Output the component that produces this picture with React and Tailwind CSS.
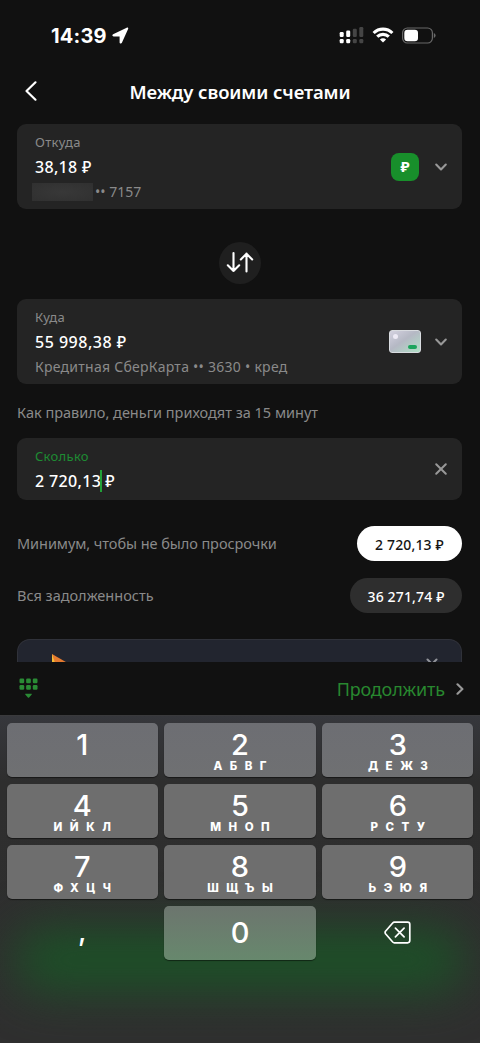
import React from "react"

const keys = [
    ["1", ""],
    ["2", "АБВГ"],
    ["3", "ДЕЖЗ"],
    ["4", "ИЙКЛ"],
    ["5", "МНОП"],
    ["6", "РСТУ"],
    ["7", "ФХЦЧ"],
    ["8", "ШЩЪЫ"],
    ["9", "ЬЭЮЯ"],
]

function Chevron() {
    return (
        <svg className="h-3 w-3.5" viewBox="0 0 14 12" fill="none" stroke="#989898" strokeWidth="2.1" strokeLinecap="round" strokeLinejoin="round">
            <path d="M2.2 3.6 7 8.4l4.8-4.8" />
        </svg>
    )
}

function StatusBar() {
    return (
        <div className="flex h-[70px] items-center justify-between pr-[44px] pl-[51px]">
            <div className="flex items-center gap-[5px] pt-px">
                <span className="font-['Inter',sans-serif] text-[20px] leading-6 font-bold tracking-[0.2px]">14:39</span>
                <svg className="h-[17px] w-[17px]" viewBox="0 0 17 17" fill="white">
                    <path d="M1.1 7.2 14.7.7c1-.5 1.9.4 1.4 1.4L9.9 15.8c-.5 1-2.300.8-2.300-.4V9.500H1.600C.3 9.500-.1 7.800 1.100 7.200Z" />
                </svg>
            </div>
            <div className="flex items-center">
                <svg className="mr-2 h-[18px] w-[25px]" viewBox="0 0 25 18" fill="white">
                    <rect x="0.7" y="6" width="4" height="5" rx="1.2" />
                    <rect x="7.2" y="4.6" width="4" height="6.4" rx="1.2" />
                    <rect x="0.7" y="13" width="4" height="4.2" rx="1.2" />
                    <rect x="7.2" y="13" width="4" height="4.2" rx="1.2" />
                    <g fill="#454545">
                        <rect x="13.8" y="2.8" width="4" height="8.2" rx="1.2" />
                        <rect x="20.3" y="1" width="4" height="10" rx="1.2" />
                        <rect x="13.8" y="13" width="4" height="4.2" rx="1.2" />
                        <rect x="20.3" y="13" width="4" height="4.2" rx="1.2" />
                    </g>
                </svg>
                <svg className="mr-2 h-4 w-[22px]" viewBox="0 0 22 16" fill="none" stroke="white" strokeWidth="3.1">
                    <path d="M1.6 6a13.4 13.4 0 0 1 18.8 0" />
                    <path d="M5.2 9.7a8.3 8.3 0 0 1 11.6 0" />
                    <path d="M11 15.6 7.9 12.5a4.4 4.4 0 0 1 6.2 0Z" fill="white" stroke="none" />
                </svg>
                <svg className="h-[17px] w-[34px]" viewBox="0 0 34 17">
                    <rect x="0.6" y="1" width="29.8" height="15" rx="4.8" fill="none" stroke="#696969" strokeWidth="1.2" />
                    <rect x="2.3" y="2.7" width="13.7" height="11.6" rx="3.2" fill="white" />
                    <path d="M31.8 6v5c1-.5 1.8-1.3 1.8-2.5S32.8 6.5 31.8 6Z" fill="#696969" />
                </svg>
            </div>
        </div>
    )
}

function Header() {
    return (
        <header className="grid h-[54px] grid-cols-[60px_1fr_60px] items-start pt-[8px]">
            <svg className="mt-[2px] ml-[24px] h-[22px] w-[14px]" viewBox="0 0 14 22" fill="none" stroke="white" strokeWidth="2.2" strokeLinecap="round" strokeLinejoin="round">
                <path d="M11.5 2.3 2.5 11l9 8.7" />
            </svg>
            <h1 className="text-center text-[18.5px] leading-7 font-semibold tracking-[-0.1px] whitespace-nowrap">Между своими счетами</h1>
        </header>
    )
}

function Accounts() {
    return (
        <>
            <section className="flex h-[85px] items-center justify-between rounded-[9px] bg-[#242424] pr-[14px] pl-[18px]">
                <div className="pt-[2px]">
                    <p className="text-[13px] leading-[20px] tracking-[0.3px] text-[#8a8a8a]">Откуда</p>
                    <p className="pt-[2px] text-[16px] leading-[26px] font-medium tracking-[0.3px]">38,18 ₽</p>
                    <div className="-ml-[3px] flex h-[24px] items-center gap-0.5 text-[14px] text-[#8a8a8a]">
                        <span className="h-[18px] w-[61px] bg-radial from-[#383838] to-[#303030]" />
                        <span>•• 7157</span>
                    </div>
                </div>
                <div className="flex items-center gap-[15px]">
                    <div className="flex size-7 items-center justify-center rounded-[8px] bg-[#188f2b] text-[15px] font-bold">₽</div>
                    <Chevron />
                </div>
            </section>

            <div className="flex h-[90px] items-center justify-center pt-[17px]">
                <button className="flex size-[42px] items-center justify-center rounded-full bg-[#1f1f1f]">
                    <svg className="h-6 w-7" viewBox="0 0 28 24" fill="none" stroke="white" strokeWidth="2.1" strokeLinecap="round" strokeLinejoin="round">
                        <path d="M7.5 2v18M1.8 14.3 7.500 20l5.700-5.700M20.500 20.500v-18M14.800 8.500l5.700-5.700 5.700 5.700" />
                    </svg>
                </button>
            </div>

            <section className="flex h-[85px] items-center justify-between rounded-[9px] bg-[#242424] pr-[14px] pl-[18px]">
                <div className="pt-[2px]">
                    <p className="text-[13px] leading-[20px] tracking-[0.2px] text-[#8a8a8a]">Куда</p>
                    <p className="pt-[2px] text-[16px] leading-[26px] font-medium tracking-[0.5px]">55 998,38 ₽</p>
                    <p className="text-[14px] leading-[24px] tracking-[0.26px] text-[#8a8a8a]">Кредитная СберКарта •• 3630 • кред</p>
                </div>
                <div className="flex items-center gap-[13px]">
                    <div className="flex h-[23px] w-8 items-start justify-between rounded-[3px] border border-[#d9dce0] bg-linear-to-br from-[#d4d2e0] via-[#b5b8c4] via-45% to-[#aee0c5] p-[3px]">
                        <span className="size-[5px] rounded-full bg-[#edeaf5]" />
                        <span className="mt-[11px] h-1 w-[9px] rounded-full bg-[#1ca45c]" />
                    </div>
                    <Chevron />
                </div>
            </section>
        </>
    )
}

function Amount() {
    return (
        <>
            <p className="pt-[16px] pb-[14px] text-[14.5px] leading-6 text-[#8a8a8a]">Как правило, деньги приходят за 15 минут</p>
            <section className="flex h-[62px] items-center justify-between rounded-[9px] bg-[#242424] pr-[14px] pl-[18px]">
                <div className="pt-px">
                    <p className="text-[13px] leading-[20px] tracking-[0.3px] text-[#1e8c33]">Сколько</p>
                    <div className="flex items-center pt-[2px] text-[16px] leading-[26px] font-medium tracking-[0.35px]">
                        <span>2 720,13</span>
                        <span className="mr-[3px] -ml-px h-[22px] w-[2px] bg-[#21a038]" />
                        <span>₽</span>
                    </div>
                </div>
                <svg className="size-[14px]" viewBox="0 0 14 14" fill="none" stroke="#989898" strokeWidth="2" strokeLinecap="round">
                    <path d="m2.2 2.2 9.6 9.6m0-9.6-9.6 9.6" />
                </svg>
            </section>
            <div className="flex items-center justify-between pt-[26px] text-[14.5px] tracking-[-0.06px] text-[#8a8a8a]">
                <span>Минимум, чтобы не было просрочки</span>
                <button className="h-[35px] w-[105px] rounded-full bg-white pt-px text-[14px] font-medium tracking-[0.15px] text-[#141414]">2 720,13 ₽</button>
            </div>
            <div className="flex items-center justify-between pt-[17px] text-[14.5px] text-[#8a8a8a]">
                <span className="pt-px">Вся задолженность</span>
                <button className="h-[35px] w-[112px] rounded-full bg-[#2e2e2e] pt-px text-[14px] font-medium tracking-[0.15px] text-white">36 271,74 ₽</button>
            </div>
        </>
    )
}

function Banner() {
    return (
        <div className="mt-[26px] flex h-[23px] items-start justify-between overflow-hidden rounded-t-[13px] border border-b-0 border-[#30323a] bg-[#22252f] pr-[23px] pl-[34px]">
            <svg className="mt-[14px] h-6 w-7 shrink-0" viewBox="0 0 28 24">
                <path d="M0 0 26 15 0 24Z" fill="#e47a30" />
                <path d="M0 0 8 24H0Z" fill="#f5bd38" />
            </svg>
            <svg className="mt-[18px] h-3 w-3 shrink-0" viewBox="0 0 12 12" fill="none" stroke="#92949a" strokeWidth="2" strokeLinecap="round">
                <path d="m1.5 1.5 9 9m0-9-9 9" />
            </svg>
        </div>
    )
}

function Toolbar() {
    return (
        <div className="flex h-[53px] items-center justify-between bg-[#111] pr-[16px] pl-[19px]">
            <svg className="mb-[2px] h-5 w-[19px]" viewBox="0 0 19 20" fill="#2a8b35">
                <rect x="0.5" y="0.5" width="4.7" height="4.7" rx="1.2" />
                <rect x="7.15" y="0.5" width="4.7" height="4.7" rx="1.2" />
                <rect x="13.8" y="0.5" width="4.7" height="4.7" rx="1.2" />
                <rect x="0.5" y="7" width="4.7" height="4.7" rx="1.2" />
                <rect x="7.15" y="7" width="4.7" height="4.7" rx="1.2" />
                <rect x="13.8" y="7" width="4.7" height="4.7" rx="1.2" />
                <path d="M6.8 15.8h5.4c.6 0 .8.5.4.9l-2.5 2.7c-.3.4-.9.4-1.2 0l-2.5-2.7c-.4-.4-.2-.9.4-.9Z" />
            </svg>
            <div className="flex items-center gap-[11px]">
                <span className="text-[18px] leading-7 tracking-[-0.15px] text-[#28882f]">Продолжить</span>
                <svg className="h-3 w-2" viewBox="0 0 8 12" fill="none" stroke="#989898" strokeWidth="2.2" strokeLinecap="round" strokeLinejoin="round">
                    <path d="m1.5 1.3 4.9 4.7-4.9 4.7" />
                </svg>
            </div>
        </div>
    )
}

function Keyboard() {
    return (
        <div className="relative h-[328px] overflow-hidden border-t border-[#3a3a3c] bg-linear-to-b from-[#36373c] via-[#2e2e2e] via-20% to-[#2f2f2f] px-[6.5px] pt-[6.5px] font-['Inter',sans-serif]">
            {/* green glow under the bottom row */}
            <div className="absolute top-[213px] right-[14px] left-[14px] h-[62px] rounded-full bg-[#1c5127] blur-[24px]" />
            <div className="relative grid grid-cols-3 gap-x-[6.5px] gap-y-[6.5px]">
                {keys.map(([digit, letters], i) => (
                    <button
                        key={digit}
                        className={`flex h-[54.5px] flex-col items-center rounded-[5px] pt-[6px] shadow-[0_1px_1px_rgba(0,0,0,0.5)] ${i < 3 ? "bg-linear-to-b from-[#6d6e73] to-[#6f7072]" : "bg-[#6e6e6e]"}`}
                    >
                        <span className="text-[29px] leading-[32px] font-medium">{digit}</span>
                        <span className="-mr-[7.5px] text-[11.5px] leading-[11px] font-extrabold tracking-[7.5px]">{letters}</span>
                    </button>
                ))}
                <button className="h-[54.5px] pb-1 text-[28px] font-medium">,</button>
                <button className="h-[54.5px] rounded-[5px] bg-linear-to-b from-[#6c756e] to-[#67886d] text-[29px] font-medium shadow-[0_1px_1px_rgba(0,0,0,0.5)]">0</button>
                <button className="flex h-[54.5px] items-center justify-center">
                    <svg className="h-[23px] w-[27px]" viewBox="0 0 27 23" fill="none" stroke="white" strokeWidth="1.7" strokeLinecap="round" strokeLinejoin="round">
                        <path d="M10.4 1.2h13.2q2.2 0 2.2 2.2v16.2q0 2.2-2.2 2.2H10.4q-1 0-1.7-.8L1.5 12.7q-.8-1.2 0-2.4L8.7 2q.7-.8 1.7-.8Z" />
                        <path d="m11.4 7.1 8.7 8.8m0-8.8-8.7 8.8" />
                    </svg>
                </button>
            </div>
        </div>
    )
}

export default function App() {
    return (
        <div className="h-[1043px] w-[480px] overflow-hidden bg-[#111] font-['Noto_Sans',sans-serif] text-white">
            <StatusBar />
            <Header />
            <main className="pr-[18px] pl-[17px]">
                <Accounts />
                <Amount />
                <Banner />
            </main>
            <Toolbar />
            <Keyboard />
        </div>
    )
}
